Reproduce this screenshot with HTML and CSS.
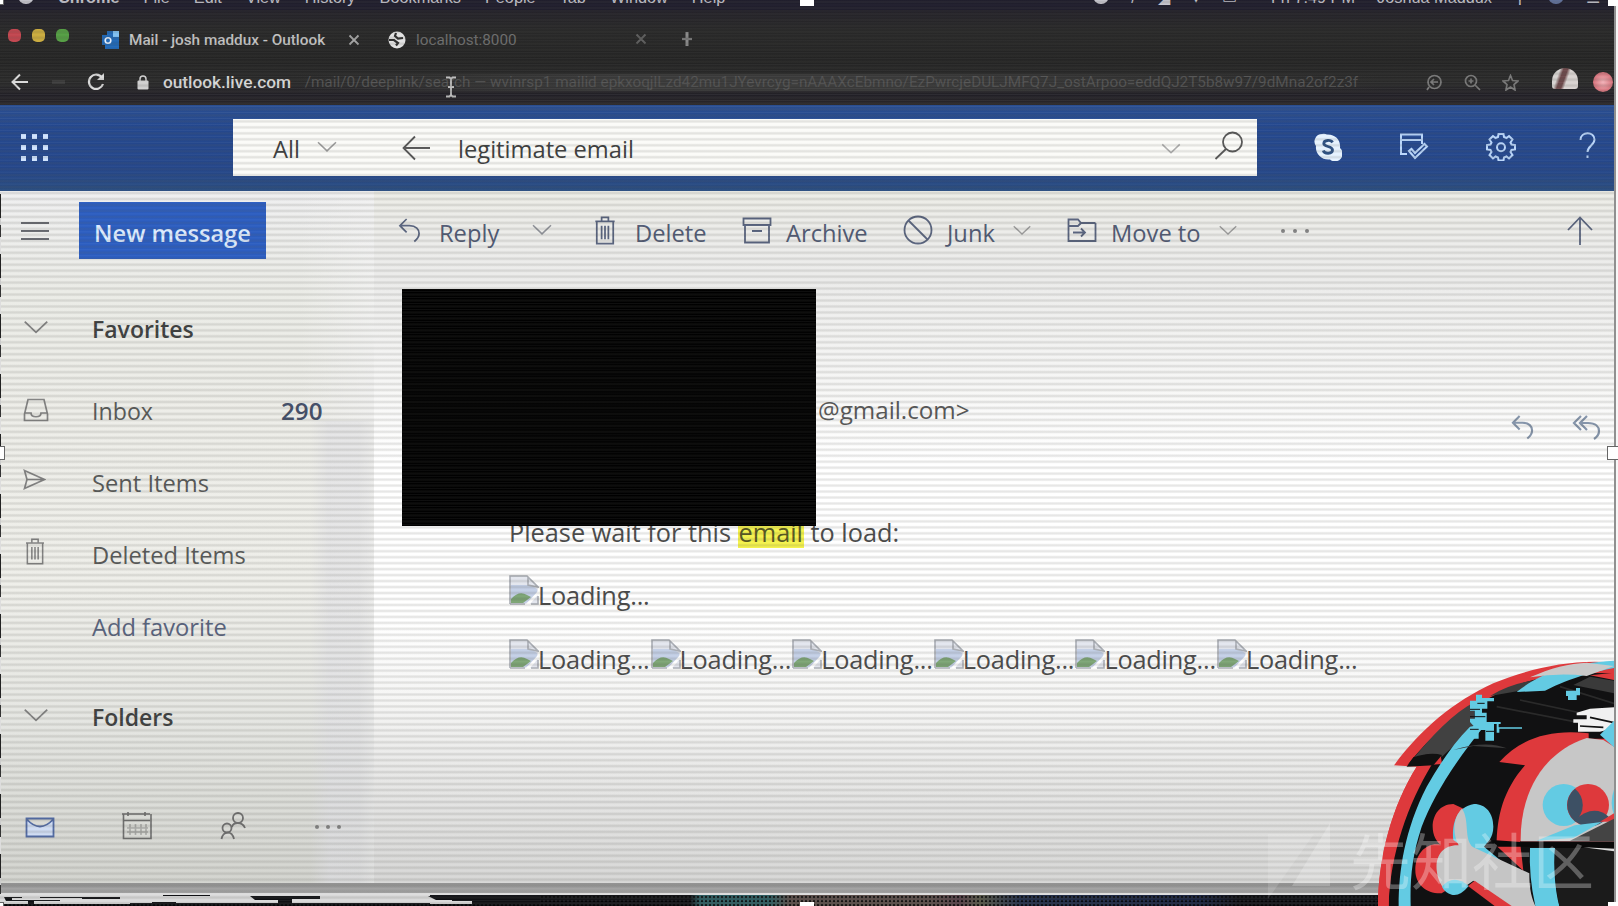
FILE: index.html
```
<!DOCTYPE html>
<html lang="en">
<head>
<meta charset="utf-8">
<title>Mail - josh maddux - Outlook</title>
<link rel="stylesheet" href="styles.css">
</head>
<body>
<svg width="0" height="0" class="defs">
  <defs>
    <symbol id="chev" viewBox="0 0 24 14"><path d="M1.500 1.500L12 11.500L22.500 1.500"/></symbol>
    <symbol id="trash" viewBox="0 0 22 30"><path d="M1 5.500H21M7.500 5V1.500H14.500V5M2.500 6V28.500H19.500V6M7.500 10V24M11 10V24M14.500 10V24"/></symbol>
    <symbol id="reply" viewBox="0 0 24 26"><path d="M9 1L2 8L9 15M2 8H12C19 8 22 12 22 16C22 20 20 22 17 24.500"/></symbol>
    <symbol id="broken" viewBox="0 0 30 30">
      <path d="M1 1H18L29 12V29H1Z" fill="#e3e6ee"/>
      <path d="M2 10H22L28 14V22L17 28H2Z" fill="#c3cfe6"/>
      <path d="M2 28V24Q10 15 18 20L22 22L14 28Z" fill="#7ba373"/>
      <path d="M17 29L29 16V20L21 29Z" fill="#fff"/>
      <path d="M1 29V1H18L29 12L19 10V2M1 29H16M22 29H29V21" fill="none" stroke="#a8acb3" stroke-width="1.600"/>
    </symbol>
  </defs>
</svg>
<div class="screen">
  <div class="menubar">
    <div class="menus"><i class="apple"></i><b>Chrome</b><span>File</span><span>Edit</span><span>View</span><span>History</span><span>Bookmarks</span><span>People</span><span>Tab</span><span>Window</span><span>Help</span></div>
    <div class="status"><i class="apple"></i><span>/</span><span>◢</span><span>▾</span><span>▭</span><span class="clock">Fri 7:49 PM</span><span>Joshua Maddux</span><span>⚲</span><i class="apple siri"></i><span>☰</span></div>
  </div>
  <div class="tabs">
    <div class="lights"><i class="r"></i><i class="y"></i><i class="g"></i></div>
    <svg class="fav" width="18" height="20" viewBox="0 0 18 20"><path d="M5 1H17V19H3V15H0V5H5Z" fill="#1e66b4"/><path d="M11 1H17V7H11Z" fill="#7ec0f2"/><circle cx="6" cy="10.500" r="2.800" fill="none" stroke="#e8f2ff" stroke-width="1.600"/></svg>
    <span class="tab-title">Mail - josh maddux - Outlook</span>
    <svg class="x1" width="12" height="12" viewBox="0 0 12 12"><path d="M1.500 1.500L10.500 10.500M10.500 1.500L1.500 10.500" stroke="#a5a5a5" stroke-width="1.800"/></svg>
    <svg class="globe" width="18" height="18" viewBox="0 0 18 18"><circle cx="9" cy="9" r="8.500" fill="#e2e2e2"/><path d="M8 2L7 5L10 7.500L15 7M1 9L6 9L10 12L8 14.500" fill="none" stroke="#2b2b2b" stroke-width="2.200"/></svg>
    <span class="tab-title dim">localhost:8000</span>
    <svg class="x2" width="12" height="12" viewBox="0 0 12 12"><path d="M1.500 1.500L10.500 10.500M10.500 1.500L1.500 10.500" stroke="#5c5c5c" stroke-width="2"/></svg>
    <svg class="plus" width="14" height="14" viewBox="0 0 14 14"><path d="M7 0V14" stroke="#888" stroke-width="3"/><path d="M2 7H12" stroke="#777" stroke-width="2.200"/></svg>
  </div>
  <div class="address">
    <svg class="back" width="18" height="18" viewBox="0 0 18 18"><path d="M17 9H2M9 1.500L1.500 9L9 16.500" fill="none" stroke="#dadada" stroke-width="2"/></svg>
    <i class="fwd"></i>
    <svg class="reload" width="18" height="18" viewBox="0 0 18 18"><path d="M15 4.500A7.200 7.200 0 1 0 16 11" fill="none" stroke="#dadada" stroke-width="2.200"/><path d="M17 0V7H10Z" fill="#dadada"/></svg>
    <svg class="lock" width="12" height="15" viewBox="0 0 12 15"><rect x="0.500" y="5.500" width="11" height="9" rx="1" fill="#cfcfcf"/><path d="M3 6V4A3 3 0 0 1 9 4V6" fill="none" stroke="#cfcfcf" stroke-width="1.600"/></svg>
    <span class="host">outlook.live.com</span>
    <span class="path">/mail/0/deeplink/search — wvinrsp1 mailid epkxoqjlLzd42mu1JYevrcyg=nAAAXcEbmno/EzPwrcjeDULJMFQ7J_ostArpoo=eddQJ2T5b8w97/9dMna2of2z3f</span>
    <div class="tools">
      <svg width="17" height="17" viewBox="0 0 17 17"><circle cx="8.500" cy="8" r="6.500"/><path d="M5 8H12M8 5L5 8L8 11M3 13L1 16"/></svg>
      <svg width="17" height="17" viewBox="0 0 17 17"><circle cx="7" cy="7" r="5.500"/><path d="M11 11L16 16M4.500 7H9.500M7 4.500V9.500"/></svg>
      <svg width="17" height="17" viewBox="0 0 17 17"><path d="M8.500 1.500L10.500 6.500L16 7L12 10.500L13 16L8.500 13L4 16L5 10.500L1 7L6.500 6.500Z"/></svg>
    </div>
    <i class="avatar"></i><i class="pink"></i>
  </div>

  <header class="header">
    <div class="waffle"><i></i><i></i><i></i><i></i><i></i><i></i><i></i><i></i><i></i></div>
    <div class="search">
      <span class="all">All</span>
      <svg class="ln c1" width="22" height="12"><use href="#chev"/></svg>
      <svg class="ln back2" width="28" height="26" viewBox="0 0 28 26"><path d="M28 13H2M13 1.500L1.500 13L13 24.500"/></svg>
      <span class="query">legitimate email</span>
      <svg class="ln c2" width="20" height="12"><use href="#chev"/></svg>
      <svg class="ln mag" width="30" height="30" viewBox="0 0 30 30"><circle cx="18.500" cy="11" r="9.500"/><path d="M12 18L1.500 28"/></svg>
    </div>
    <div class="apps">
      <svg class="skype" width="28" height="28" viewBox="0 0 28 28"><path d="M8 1A7 7 0 0 1 13 1.500C21 1 27 7 26 15A7.500 7.500 0 0 1 16 26.500C8 27.500 1 21 2 13A7.500 7.500 0 0 1 8 1Z" fill="#e6f3ff"/><path d="M18.500 9.500C17 6.500 9.800 6.800 9.800 10.500C9.800 14.500 18.500 12.500 18.500 17C18.500 21 10.500 21.500 9.300 17.500" fill="none" stroke="#2b4f80" stroke-width="2.800"/></svg>
      <svg class="wl todo" width="30" height="28" viewBox="0 0 30 28"><path d="M8 21H2V1.500H23V11M2 7H23M10 18L16 25L28 13.500L25.500 11L16 20L12.500 16Z"/></svg>
      <svg class="wl gear" width="30" height="28" viewBox="0 0 30 28"><path d="M12 4L12.500 1H17.500L18 4L20.500 5L23 3L26.500 6.500L24.500 9.500L25.500 11.500L29 12V16.500L25.500 17L24.500 19L26.500 22L23 25.500L20.500 23.500L18 24.500L17.500 27.500H12.500L12 24.500L9.500 23.500L7 25.500L3.500 22L5.500 19L4.500 17L1 16.500V12L4.500 11.500L5.500 9.500L3.500 6.500L7 3L9.500 5Z"/><circle cx="15" cy="14.200" r="4"/></svg>
      <svg class="wl help" width="17" height="27" viewBox="0 0 17 27"><path d="M1.500 8C1.500 -1 15.500 -1 15.500 7.500C15.500 13 8.500 14 8.500 20M8.500 23.500V26"/></svg>
    </div>
  </header>

  <div class="body">
    <nav class="side">
      <div class="newrow">
        <svg class="burger" width="30" height="20" viewBox="0 0 30 20"><path d="M1 2H29M1 10H29M1 18H29"/></svg>
        <span class="newmsg">New message</span>
      </div>
      <div class="row fav-h"><span class="ic"><svg width="26" height="15"><use href="#chev"/></svg></span><b>Favorites</b></div>
      <div class="row inbox"><span class="ic"><svg width="26" height="24" viewBox="0 0 26 24"><path d="M5 1.500H21L24.500 16V22.500H1.500V16ZM2 15H8C8 20 18 20 18 15H24"/></svg></span><span>Inbox</span><em>290</em></div>
      <div class="row"><span class="ic up"><svg width="23" height="21" viewBox="0 0 23 21"><path d="M1.500 1.500L21.500 10.500L1.500 19.500L4 10.500ZM4 10.500H20"/></svg></span><span>Sent Items</span></div>
      <div class="row"><span class="ic up bin"><svg width="20" height="27"><use href="#trash"/></svg></span><span>Deleted Items</span></div>
      <div class="row link"><span class="ic"></span><span>Add favorite</span></div>
      <div class="row folders"><span class="ic"><svg width="26" height="15"><use href="#chev"/></svg></span><b>Folders</b></div>
      <div class="modules">
        <svg class="mail" width="30" height="21" viewBox="0 0 30 21"><path d="M1.500 1.500H28.500V19.500H1.500ZM1.500 2Q15 17 28.500 2" fill="#cfdcf3"/></svg>
        <svg class="cal" width="32" height="28" viewBox="0 0 32 28"><path d="M1 2H29M2.500 2V26.500H30V2M3 8.500H29M7 0V4M24 0V4"/><path d="M9 12V23M14.500 12V23M20 12V23M25 12V23M6 16H27M6 20H27" opacity=".45"/></svg>
        <svg class="people" width="26" height="28" viewBox="0 0 26 28"><circle cx="18" cy="6" r="5"/><circle cx="7" cy="16" r="4.500"/><path d="M12 15C13 10 22 9 25 16M1.500 27C3 19 12 18 14 27"/></svg>
        <span class="dots"><i></i><i></i><i></i></span>
      </div>
    </nav>

    <main class="main">
      <div class="toolbar">
        <svg class="t-reply" width="23" height="25"><use href="#reply"/></svg><span class="w-reply">Reply</span>
        <svg class="t-c1" width="22" height="12"><use href="#chev"/></svg>
        <svg class="t-del" width="22" height="29"><use href="#trash"/></svg><span class="w-del">Delete</span>
        <svg class="t-arc" width="30" height="27" viewBox="0 0 30 27"><path d="M1.500 1.500H28.500V8H1.500ZM3 8V25.500H27V8M10 14H20"/></svg><span class="w-arc">Archive</span>
        <svg class="t-junk" width="30" height="30" viewBox="0 0 30 30"><circle cx="15" cy="15" r="13.500"/><path d="M5.500 5.500L24.500 24.500"/></svg><span class="w-junk">Junk</span>
        <svg class="t-c2" width="20" height="11"><use href="#chev"/></svg>
        <svg class="t-mov" width="30" height="25" viewBox="0 0 30 25"><path d="M28.500 5V23H1.500V1.500H11L14 5H28.500M1.500 8H11L14 5M6 14.500H18M14 10.500L18 14.500L14 18.500"/></svg><span class="w-mov">Move to</span>
        <svg class="t-c3" width="20" height="11"><use href="#chev"/></svg>
        <span class="dots"><i></i><i></i><i></i></span>
        <svg class="t-up" width="26" height="29" viewBox="0 0 26 29"><path d="M13 29V2M1 14L13 1.500L25 14"/></svg>
      </div>
      <section class="sender">
        <div class="redacted"></div>
        <span class="addr">@gmail.com&gt;</span>
        <div class="acts">
          <svg width="23" height="25"><use href="#reply"/></svg>
          <svg width="29" height="25" viewBox="0 0 29 25"><path d="M9 1L2 8L9 15M15 1L8 8L15 15M8 8H16C24 8 27 12 27 16C27 20 25 22 22 24"/></svg>
        </div>
      </section>
      <section class="mailbody">
        <p class="wait">Please wait for this <mark>email</mark> to load:</p>
        <p class="imgs"><span><svg width="30" height="30"><use href="#broken"/></svg>Loading...</span></p>
        <p class="imgs two"><span><svg width="30" height="30"><use href="#broken"/></svg>Loading...</span><span><svg width="30" height="30"><use href="#broken"/></svg>Loading...</span><span><svg width="30" height="30"><use href="#broken"/></svg>Loading...</span><span><svg width="30" height="30"><use href="#broken"/></svg>Loading...</span><span><svg width="30" height="30"><use href="#broken"/></svg>Loading...</span><span><svg width="30" height="30"><use href="#broken"/></svg>Loading...</span></p>
      </section>
    </main>
  </div>
  <div class="band"></div>
  <div class="noise"><svg width="1614" height="11" viewBox="0 0 1614 11">
    <path d="M0 0H430V1H530V9H430V8H130V9H0Z" fill="#d9d9d9"/>
    <path d="M4 2H22V3H12V5H60V6H34V9H28V6H6ZM40 2H120V4H82V3H40ZM163 0H210V1H163ZM152 7H176V9H152ZM250 1H320V4H292V9H278V5H255ZM428 1H540V9H472V6H452V5H436Z" fill="#101114"/>
  </svg></div>
  <svg class="caret" width="12" height="22" viewBox="0 0 12 22"><path d="M1 1.500H4.500L6 3L7.500 1.500H11M6 3V19M1 20.500H4.500L6 19L7.500 20.500H11M3 11H9" fill="none" stroke="#bdbdbd" stroke-width="1.800"/></svg>
  <div class="scan"></div>
</div>

<svg class="art" width="374" height="266" viewBox="0 0 1122 798">
  <path d="M1122 68C1000 56 870 84 760 130C640 185 540 270 462 376L530 380C455 500 415 650 414 798H1122Z" fill="#de393c"/>
  <path d="M502 376C590 262 700 185 850 128L960 98L1122 100V798H446C448 640 490 500 552 388L575 374L606 372L602 345C570 336 530 350 502 376Z" fill="#111112"/>
  <path d="M530 380L575 374C505 490 450 640 446 798H414C415 650 455 500 530 380Z" fill="#de393c"/>
  <path d="M510 368C580 280 640 220 705 185L700 262L606 350C570 335 540 345 510 368Z" fill="#414141"/>
  <path d="M520 352Q570 335 606 345L580 376L500 380Z" fill="#111"/>
  <path d="M750 168Q810 130 890 120L840 152Z" fill="#3d3d3d"/>
  <path d="M830 156C900 100 980 70 1122 62V84C1060 96 1000 110 915 152Z" fill="#63cbe3"/>
  <path d="M870 112C930 84 990 70 1040 68L1122 78L1040 108Q960 98 870 112Z" fill="#c9c9c9"/>
  <path d="M1050 106L1122 98V120Z" fill="#de393c"/>
  <path d="M1050 110L1122 122V160L1000 135Z" fill="#3a3a3a"/>
  <path d="M770 200L1122 268M840 180L1122 240M960 140L1122 190" stroke="#2a2a2a" stroke-width="5"/>
  <path d="M476 798C476 690 494 570 560 440C600 370 640 310 690 260L740 250C640 370 580 470 545 560C515 650 510 720 512 798Z" fill="#63cbe3"/>
  <path d="M690 182H708V164H726V174H762V184H742V206H726V218H740V246H782V252H762V302H736V270H716V296H690V284H704V262L690 246V236H704V212H690ZM978 152H1008V144H1020V166H1010V180H984V168H978ZM770 246H776V262H846V266H778V278H770Z" fill="#63cbe3"/>
  <path d="M690 208H720M690 230H736M712 190H734M738 274H762M690 268H716" stroke="#111" stroke-width="3"/>
  <path d="M640 330Q740 300 800 325L700 318Z" fill="#3b3b3b"/>
  <path d="M1010 218L1050 206L1122 202V252L1108 268L1080 275H1014V248H1000V238H1040V226H1010Z" fill="#f1f1f1"/>
  <path d="M1050 232L1122 248M1020 258L1090 262" stroke="#111" stroke-width="5"/>
  <path d="M778 366C840 296 930 266 1046 280V296H1122V604H840L850 692L770 618C770 530 790 450 855 376Z" fill="#de393c"/>
  <path d="M842 604C840 470 900 340 1040 294L1090 300L1122 320V604Z" fill="#c7c7c7"/>
  <path d="M1080 284L1122 242V322Z" fill="#63cbe3"/>
  <circle cx="971" cy="495" r="63" fill="#63cbe3"/>
  <circle cx="1044" cy="495" r="63" fill="#de393c"/>
  <path d="M1005 446A63 63 0 0 1 1005 544A63 63 0 0 1 1005 446Z" fill="#3d5064"/>
  <path d="M1002 542Q1060 490 1106 530Q1070 570 1025 556Z" fill="#3d5064"/>
  <path d="M1122 448Q1108 490 1122 525Z" fill="#63cbe3"/>
  <path d="M1080 545L1122 520V545Z" fill="#de393c"/>
  <path d="M890 602L1004 556L1085 546L1000 594Z" fill="#63cbe3"/>
  <path d="M990 602L1122 536V604Z" fill="#444"/>
  <path d="M757 600L842 606H1122V625H945V620H757Z" fill="#090909"/>
  <path d="M870 624H945C940 680 945 750 958 798H886Q866 710 870 624Z" fill="#63cbe3"/>
  <path d="M945 624H1122V798H958Q940 710 945 624Z" fill="#1b1b1b"/>
  <path d="M1030 622L1122 626V634Z" fill="#ddd"/>
  <path d="M640 492C600 492 578 525 578 560C578 585 590 606 602 614C560 606 526 640 526 690C526 735 560 762 605 760L700 700V520Z" fill="#de393c"/>
  <path d="M702 492C738 492 760 520 760 560C760 595 740 608 732 620L780 660V694L640 600C635 550 650 500 702 492Z" fill="#63cbe3"/>
  <path d="M666 506C640 530 636 580 656 616C610 614 586 646 590 690Q596 748 640 764L700 722L810 798H886C870 765 868 730 868 700L700 622C670 600 690 540 666 506Z" fill="#c5c5c5"/>
  <path d="M684 738L704 722L815 798H764Z" fill="#de393c"/>
  <path d="M606 740Q640 700 686 738Q660 770 635 764Q615 758 606 740Z" fill="#63cbe3"/>
</svg>
<div class="watermark"><svg width="64" height="76" viewBox="0 0 64 76"><path d="M0 11H46L0 76Z" opacity=".45"/><path d="M62 0V63H24Z" opacity=".7"/></svg><span>先知社区</span></div>
<i class="edge"></i><i class="ledge"></i>
<i class="handle tl"></i><i class="handle tc"></i><i class="handle tr"></i><i class="handle ml"></i><i class="handle mr"></i><i class="handle bl"></i><i class="handle bc"></i><i class="handle br"></i>
</body>
</html>
```

FILE: styles.css
```
* { box-sizing: border-box; }
body { margin: 0; width: 1618px; height: 906px; overflow: hidden; position: relative; background: #f7f7f7; font-family: "Open Sans", "Noto Sans", sans-serif; font-size: 23.7px; line-height: 32px; color: #3a3c3c; }
p { margin: 0; }
i, em { font-style: normal; }
svg { display: block; flex: none; fill: none; }
.defs { position: absolute; }
span, b, em { white-space: nowrap; }
.screen { position: relative; width: 1614px; height: 906px; display: flex; flex-direction: column; overflow: hidden; }

/* menu bar, cut off by the top of the capture */
.menubar { height: 10px; flex: none; background: #1d1b2a; color: #c4c3cc; font: 16.3px/18px "Liberation Sans", sans-serif; display: flex; justify-content: space-between; overflow: hidden; }
.menus, .status { display: flex; margin-top: -12px; height: 18px; }
.menus { padding-left: 18px; gap: 24px; }
.apple { width: 16px; height: 16px; border-radius: 8px; background: #c9c8d0; }
.siri { background: #60719c; }
.status { gap: 22px; padding-right: 14px; }
.clock { margin-left: 12px; }

/* browser chrome */
.tabs { height: 50px; flex: none; background: linear-gradient(#211f27, #262626 40%, #222); display: flex; align-items: center; padding: 8px 0 0 8px; }
.lights { display: flex; gap: 11px; margin-top: -8px; }
.lights i { width: 13px; height: 13px; border-radius: 5px; }
.r { background: #c1444d; } .y { background: #c9aa3c; border-radius: 50%; } .g { background: #529c41; }
.fav { margin-left: 33px; margin-top: 2px; }
.tab-title { font: 500 15.3px/20px Roboto, sans-serif; color: #c3c3c3; margin-left: 9px; width: 197px; margin-top: 1px; }
.x1 { margin-left: 22px; margin-top: 1px; }
.globe { margin-left: 28px; margin-top: 2px; }
.dim { color: #6c6c6c; font-weight: 400; width: 106px; margin-left: 10px; }
.x2 { margin-left: 113px; } .plus { margin-left: 33px; }
.address { height: 45px; flex: none; background: linear-gradient(#222, #292929 50%, #211f26 80%, #2a2729); display: flex; align-items: center; padding: 0 1px 1px 11px; }
.fwd { width: 13px; height: 4px; margin-left: 23px; background: #3a3a3a; }
.reload { margin-left: 22px; } .lock { margin-left: 32px; }
.host { font: 500 17.3px/20px Roboto, sans-serif; color: #d8d8d8; margin-left: 14px; width: 131px; }
.path { width: 1098px; margin-left: 2px; padding-left: 10px; overflow: hidden; color: #505050; font: 15.3px/17px Roboto, sans-serif; background: linear-gradient(90deg, transparent, #383838 30%, #383838 55%, transparent); }
.tools { display: flex; gap: 21px; margin-left: 44px; stroke: #777; stroke-width: 1.7; }
.avatar { width: 26px; height: 21px; margin-left: 33px; margin-top: -7px; border-radius: 13px 13px 3px 3px; background: linear-gradient(110deg, #d5d2d0 25%, #6b4749 36% 48%, #d8d2d0 58%); }
.pink { width: 20px; height: 20px; margin-left: 15px; border-radius: 50%; background: radial-gradient(#f0b0b6, #c8545f); }

/* outlook header */
.header { height: 86px; flex: none; background: linear-gradient(#2a4e90, #23478e 25%, #234589 75%, #284b7e); display: flex; align-items: center; padding: 0 14px 2px 21px; }
.waffle { display: grid; grid-template-columns: repeat(3, 5px); gap: 6px; width: 27px; }
.waffle i { width: 5px; height: 5px; background: #cfe3ff; }
.search { margin-left: 185px; width: 1024px; height: 57px; background: #fbfbf8; display: flex; align-items: center; padding-left: 40px; margin-top: 1px; }
.ln { stroke: #555; stroke-width: 1.8; }
.all { width: 29px; margin-top: 2px; }
.c1 { margin-left: 14px; margin-top: -2px; stroke: #999; } .back2 { margin-left: 64px; }
.query { margin-left: 28px; width: 178px; margin-top: 2px; }
.c2 { margin-left: 525px; margin-top: 3px; stroke: #aaa; } .mag { margin-left: 33px; margin-top: -3px; }
.apps { display: flex; align-items: center; margin-left: 57px; }
.wl { stroke: #b9d6fb; stroke-width: 2; }
.todo { margin-left: 57px; } .gear { margin-left: 57px; } .help { margin-left: 63px; margin-top: -3px; }

/* mail area */
.body { position: relative; z-index: 0; height: 692px; flex: none; display: flex; background: linear-gradient(#ecece6 0, #ececea 50px, #ebebea 90px, #f5f5f4 180px, #fff 270px, #fff 430px, #f5f5f4 510px, #e8e8e7 580px, #d6d6d5 692px); }
.side { width: 374px; flex: none; background: linear-gradient(90deg, transparent 83%, rgba(222,222,228,.55) 88%, rgba(222,222,228,.5) 96%, rgba(235,235,238,.5)) 0 230px no-repeat, linear-gradient(90deg, transparent 80%, rgba(242,242,242,.8)) 0 0 / 100% 230px no-repeat, linear-gradient(#efeff0 0, #eaebe6 100px, #edede8 220px, #eeeee9 400px, #e4e5e1 530px, #d2d3ce 692px); }
.newrow { display: flex; align-items: center; height: 57px; margin-top: 11px; padding-left: 20px; }
.burger { stroke: #66686f; stroke-width: 1.8; }
.newmsg { margin-left: 29px; width: 187px; height: 57px; line-height: 62px; text-align: center; background: #2a5cc0; color: #dcebff; font-weight: 600; font-size: 23.6px; }
.row { height: 72px; display: flex; align-items: center; padding-left: 23px; color: #555756; }
.row b { font-weight: 600; color: #3c3e3e; font-size: 23px; }
.row > span:not(.ic), .row b, .row em { margin-top: -1px; }
.ic { width: 69px; display: flex; stroke: #808080; stroke-width: 1.7; }
.fav-h .ic, .folders .ic { margin-top: -4px; }
.inbox .ic { margin-top: -3px; }
.up { margin-top: -7px; }
.bin { padding-left: 2px; }
.fav-h { margin-top: 34px; } .inbox { margin-top: 10px; }
.inbox > span:nth-child(2) { width: 189px; font-size: 23.2px; }
.inbox em { font-weight: 600; color: #414c66; font-size: 24.2px; }
.link { color: #56617c; }
.folders { margin-top: 18px; }
.modules { display: flex; align-items: center; height: 40px; margin-top: 54px; padding-left: 25px; stroke: #6c6c6c; stroke-width: 1.8; }
.mail { stroke: #5069a2; } .cal { margin-left: 66px; margin-top: -2px; stroke-width: 1.6; } .people { margin-left: 67px; margin-top: -2px; }
.dots { display: flex; gap: 7px; }
.dots i { width: 4px; height: 4px; border-radius: 2px; background: #808080; }
.modules .dots { margin-left: 69px; }
.main { width: 1240px; flex: none; }
.toolbar { height: 80px; display: flex; align-items: center; padding-left: 24px; stroke: #56617c; stroke-width: 1.8; color: #4e5872; }
.toolbar span { line-height: 30px; }
.toolbar > span:not(.dots) { margin-top: 3px; }
.toolbar svg { margin-top: -2px; }
.w-reply { margin-left: 18px; width: 61px; } .t-c1 { margin-left: 31px; stroke: #8a8d94; }
.t-del { margin-left: 41px; } .w-del { margin-left: 19px; width: 72px; }
.t-arc { margin-left: 35px; } .w-arc { margin-left: 14px; width: 82px; }
.t-junk { margin-left: 35px; } .w-junk { margin-left: 14px; width: 51px; } .t-c2 { margin-left: 14px; stroke: #999; }
.t-mov { margin-left: 35px; } .w-mov { margin-left: 14px; width: 93px; } .t-c3 { margin-left: 14px; stroke: #999; }
.toolbar .dots { margin-left: 43px; gap: 8px; }
.t-up { margin-left: auto; margin-right: 21px; }
.sender { display: flex; margin: 18px 0 0 28px; height: 237px; }
.redacted { width: 414px; height: 237px; background: #000; }
.addr { margin: 105px 0 0 2px; font-size: 24.2px; color: #555; width: 155px; }
.acts { display: flex; gap: 38px; margin: 126px 0 0 auto; padding-right: 13px; stroke: #8292a8; stroke-width: 2.2; }
.mailbody { position: relative; z-index: -1; margin: -10px 0 0 135px; font-size: 25.3px; color: #484848; }
.wait { height: 33px; line-height: 33px; }
mark { background: #f4f24b; color: #55561e; display: inline-block; height: 32px; padding: 0 1px; }
.imgs { display: flex; height: 33px; margin-top: 26px; }
.two { margin-top: 31px; }
.imgs span { display: flex; width: 141.6px; line-height: 40px; letter-spacing: -.2px; }
.imgs svg { margin-right: -1px; }

.band { height: 10px; flex: none; background: linear-gradient(#929292, #a8a8a8); }
.noise { height: 13px; flex: none; border-top: 2px solid #dcdcdc; background: radial-gradient(circle, rgba(0,0,0,.75) 1.1px, transparent 1.6px) 0 0 / 4px 4px, linear-gradient(90deg, #15161a 690px, #2e5d61 700px 770px, #5c4f4b 790px 930px, #57424a 960px, #59594a 980px, #24304a 1020px, #1b2440 1200px, #14151a 1240px); }
.scan { position: absolute; inset: 0; background: repeating-linear-gradient(transparent 0, rgba(95,95,90,.15) 1.5px, rgba(95,95,90,.15) 2.5px, transparent 4px, rgba(255,255,255,.06) 5px, transparent 5.97px); }
.caret { position: absolute; left: 445px; top: 76px; }

.art { position: absolute; left: 1240px; top: 640px; }
.watermark { position: absolute; left: 1268px; top: 823px; display: flex; opacity: .3; color: #fff; }
.watermark path { fill: #fff; }
.watermark span { font: 61px/76px "Noto Sans CJK SC", sans-serif; margin: -2px 0 0 18px; }
.edge { position: absolute; left: 1614px; top: 0; width: 2px; height: 906px; background: #909090; }
.ledge { position: absolute; left: 0; top: 194px; width: 1px; height: 700px; background: repeating-linear-gradient(#222 0 24px, #ccc 24px 31px, #333 31px 43px, #ddd 43px 60px); }
.handle { position: absolute; width: 14px; height: 14px; background: #fff; border: 1px solid #666; }
.tl { left: -10px; top: -9px; } .tc { left: 800px; top: -8px; border-color: #fff; } .tr { left: 1608px; top: -8px; border-color: #fff; }
.ml { left: -9px; top: 446px; } .mr { left: 1607px; top: 446px; }
.bl { left: -10px; top: 902px; } .bc { left: 800px; top: 902px; border-color: #fff; } .br { left: 1608px; top: 902px; border-color: #fff; }
```
